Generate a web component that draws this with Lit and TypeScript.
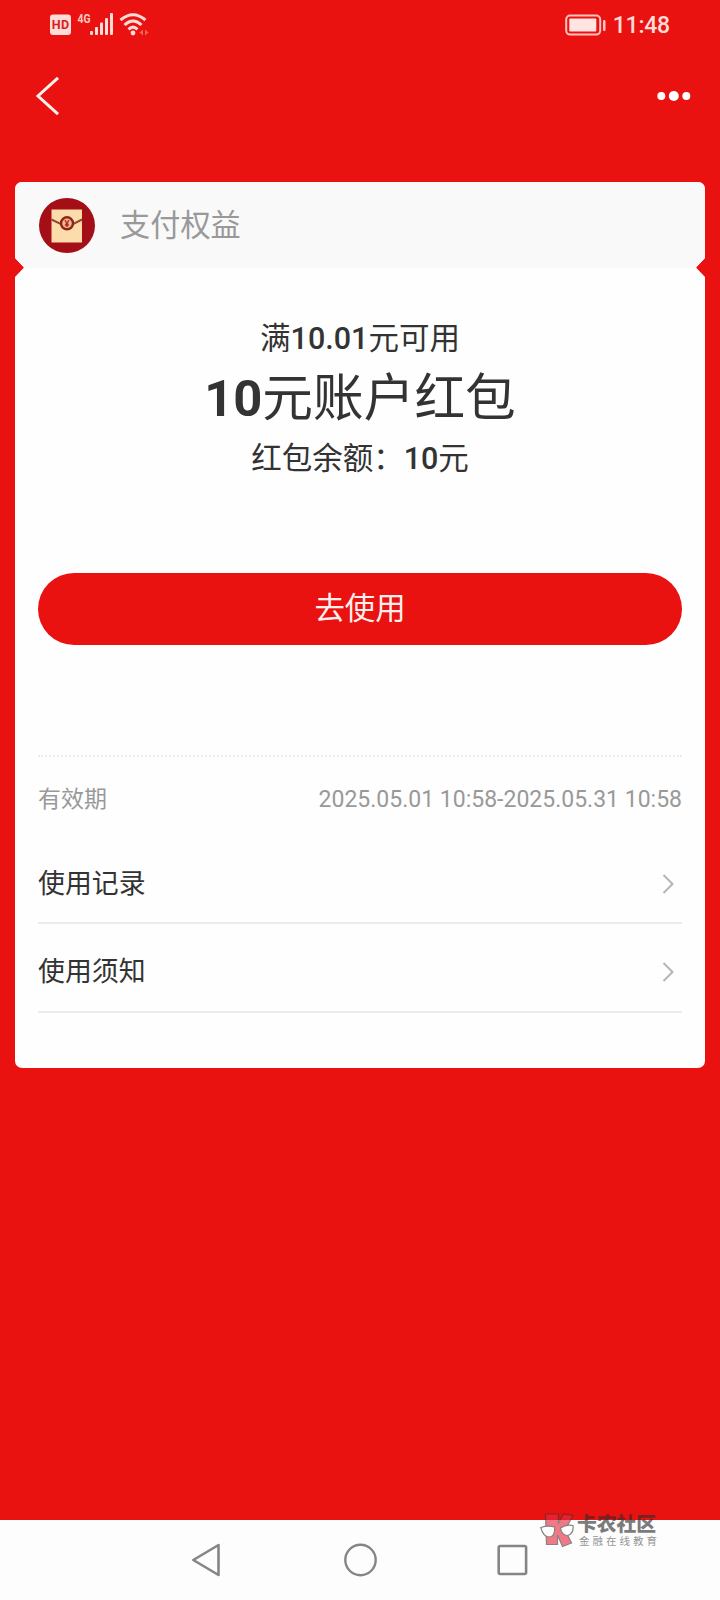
import { LitElement, html, css } from "lit";
import { customElement } from "lit/decorators.js";

@customElement("app-root")
export class AppRoot extends LitElement {
  static styles = css`
    :host {
      display: flex;
      flex-direction: column;
      width: 720px;
      height: 1600px;
      position: relative;
      overflow: hidden;
      background: #e91210;
      color: #333;
      font-family: Roboto, "Noto Sans CJK SC", sans-serif;
    }
    * { box-sizing: border-box; }
    svg { display: block; overflow: visible; flex: none; }
    .status {
      height: 48px;
      padding: 0 50px 0 49px;
      display: flex;
      justify-content: space-between;
      align-items: center;
    }
    .right { display: flex; align-items: center; gap: 7px; padding-top: 1px; }
    .time { font-size: 23px; font-weight: 500; line-height: 28px; letter-spacing: -0.2px; color: #ffdcd8; margin-top: 2px; }
    .hd { font: 700 12.5px Roboto, sans-serif; fill: #d8201c; }
    .net { font: 700 12px Roboto, sans-serif; fill: #ffc9c4; }
    .titlebar {
      height: 134px;
      padding: 29px 30px 0 36px;
      display: flex;
      justify-content: space-between;
      align-items: flex-start;
    }
    .card {
      margin: 0 15px;
      height: 886px;
      flex: none;
      border-radius: 7px;
      background: #fefefe;
      overflow: hidden;
      clip-path: polygon(0 0, 100% 0, 100% 76px, 681px 85.5px, 100% 95px, 100% 100%, 0 100%, 0 95px, 9px 85.5px, 0 76px);
    }
    .head {
      height: 86px;
      background: #f9f9f9;
      display: flex;
      align-items: center;
      padding-left: 24px;
      gap: 25px;
      font-size: 30.2px;
      color: #999;
    }
    .head span { padding-bottom: 4px; }
    .yen { font: 700 9px Roboto, sans-serif; fill: #a82c20; }
    .body { padding: 0 23px; display: flex; flex-direction: column; }
    .offer { height: 305px; padding-top: 50px; text-align: center; }
    .line { font-size: 30.5px; line-height: 42px; height: 42px; }
    .big { font-size: 50.7px; line-height: 78px; height: 78px; }
    .num { font-weight: 500; }
    .big .num { font-weight: 700; }
    .use {
      height: 72px;
      border: 0;
      padding: 0;
      border-radius: 36px;
      background: #e91210;
      color: #fff0ee;
      font: 400 30.4px/72px Roboto, "Noto Sans CJK SC", sans-serif;
    }
    .dotted { margin-top: 110px; border-top: 2px dotted #ebebeb; }
    .valid {
      height: 84px;
      display: flex;
      align-items: center;
      justify-content: space-between;
      font-size: 23px;
      color: #999;
    }
    .label { padding-bottom: 5px; }
    .row {
      display: flex;
      align-items: center;
      justify-content: space-between;
      height: 89px;
      padding: 6px 9px 0 0;
      font-size: 26.9px;
      box-shadow: inset 0 -2px #ececec;
    }
    .row span { padding-bottom: 4px; }
    .row.first { height: 83px; padding-top: 2px; }
    .nav {
      margin-top: auto;
      height: 80px;
      background: #fdfdfd;
      display: flex;
      justify-content: space-between;
      align-items: center;
      padding: 0 192px 0 191px;
    }
    .home { margin-left: 3px; }
    .mark {
      position: absolute;
      left: 540px;
      top: 1512px;
      display: flex;
      gap: 3px;
      opacity: 0.62;
      color: #2d2d2d;
      font-family: "Noto Sans CJK SC", sans-serif;
      white-space: nowrap;
    }
    .name { font-size: 19.8px; line-height: 22px; font-weight: 900; }
    .sub { font-size: 10.5px; line-height: 13px; letter-spacing: 3px; padding-left: 2px; color: #555; }
  `;

  private chevron() {
    return html`<svg width="10" height="20" viewBox="0 0 10 20" fill="none" stroke="#b5b5b5" stroke-width="2">
      <path d="M.5 1 9.500 10 .5 19" />
    </svg>`;
  }

  render() {
    return html`
      <div class="status">
        <svg width="100" height="48" viewBox="0 0 100 48" fill="#ffdcd8">
          <rect x="1" y="14.5" width="21" height="20.5" rx="3" />
          <text class="hd" x="2.7" y="29.3" textLength="17.5">HD</text>
          <text class="net" x="28.5" y="22.8" textLength="13" lengthAdjust="spacingAndGlyphs">4G</text>
          <g>
            <rect x="41" y="31" width="3" height="4" rx="1" />
            <rect x="46" y="27" width="3" height="8" rx="1" />
            <rect x="51" y="22.5" width="3" height="12.5" rx="1" />
            <rect x="56" y="18" width="3" height="17" rx="1" />
            <rect x="61" y="13" width="3" height="22" rx="1" />
          </g>
          <g fill="none" stroke="#ffdcd8" stroke-width="3">
            <path d="M71.5 20Q84 9.500 96.500 20" />
            <path d="M75.500 25Q84 17 92.500 25" />
            <path d="M79.5 29.3Q84 25 88.5 29.3" />
          </g>
          <circle cx="84" cy="33" r="2.4" />
          <path d="M94 29.500v6l-3.500-3zM96 29.500v6l3.500-3z" opacity=".4" />
        </svg>
        <div class="right">
          <svg width="41" height="22" viewBox="0 0 41 22" fill="#ffe4e1">
            <rect x="1.2" y="1.6" width="34" height="19" rx="4" fill="none" stroke="#ffc4bf" stroke-width="2" />
            <rect x="4.3" y="4.6" width="27" height="13" rx="1" />
            <rect x="38" y="6" width="2.5" height="11" rx="1" fill="#ffc4bf" />
          </svg>
          <span class="time">11:48</span>
        </div>
      </div>
      <div class="titlebar">
        <svg width="23" height="38" viewBox="0 0 23 38" fill="none" stroke="#fff0ec" stroke-width="3">
          <path d="M22 .8 2 19 22 37.2" />
        </svg>
        <svg width="34" height="38" viewBox="0 0 34 38" fill="#fff">
          <circle cx="5.3" cy="19" r="4" />
          <circle cx="17.8" cy="19" r="5" />
          <circle cx="30.3" cy="19" r="4" />
        </svg>
      </div>
      <div class="card">
        <div class="head">
          <svg width="56" height="55" viewBox="0 0 56 55">
            <ellipse cx="28" cy="27.5" rx="28" ry="27.5" fill="#a40f17" />
            <rect x="12.5" y="11.5" width="30.5" height="33" fill="#fddcab" />
            <path d="M12.5 21.5 22 26.2M34 26.2 43 21.5" fill="none" stroke="#8f4a2c" stroke-width="2" />
            <circle cx="28" cy="25.3" r="6" fill="#f7b68e" stroke="#8f2418" stroke-width="2.4" />
            <text class="yen" x="28" y="28.7" text-anchor="middle">¥</text>
          </svg>
          <span>支付权益</span>
        </div>
        <div class="body">
          <div class="offer">
            <div class="line">满<span class="num">10.01</span>元可用</div>
            <div class="big"><span class="num">10</span>元账户红包</div>
            <div class="line">红包余额：<span class="num">10</span>元</div>
          </div>
          <button class="use">去使用</button>
          <div class="dotted"></div>
          <div class="valid"><span class="label">有效期</span><span>2025.05.01 10:58-2025.05.31 10:58</span></div>
          <div class="row first"><span>使用记录</span>${this.chevron()}</div>
          <div class="row"><span>使用须知</span>${this.chevron()}</div>
        </div>
      </div>
      <div class="nav">
        <svg width="29" height="34" viewBox="0 0 29 34" fill="none" stroke="#858585" stroke-width="2.6" stroke-linejoin="round">
          <path d="M27.5 2v30L2.3 17z" />
        </svg>
        <svg class="home" width="33" height="34" viewBox="0 0 33 34" fill="none" stroke="#858585" stroke-width="2.4">
          <circle cx="16.5" cy="17" r="15.2" />
        </svg>
        <svg width="31" height="34" viewBox="0 0 31 34" fill="none" stroke="#858585" stroke-width="2.6">
          <rect x="1.7" y="3" width="27.4" height="28" rx="1.5" />
        </svg>
      </div>
      <div class="mark">
        <svg width="34" height="36" viewBox="0 0 34 36" stroke="#4a3434" stroke-width="1.2">
          <path d="M5.500 2H18.500v9L23.500 2 33 3.500 25 18 31.500 31 22.500 34.500 17.500 23v9.500H6.500z" fill="#e8293f" />
          <path d="M.8 15.500Q8 13 14.500 15Q15.500 25 8.500 25Q3 24 .8 15.500zM20.500 16Q26 12 33 13.500Q34 22 27.500 23.500Q21.500 23 20.500 16z" fill="#fff" />
        </svg>
        <div>
          <div class="name">卡农社区</div>
          <div class="sub">金融在线教育</div>
        </div>
      </div>
    `;
  }
}
